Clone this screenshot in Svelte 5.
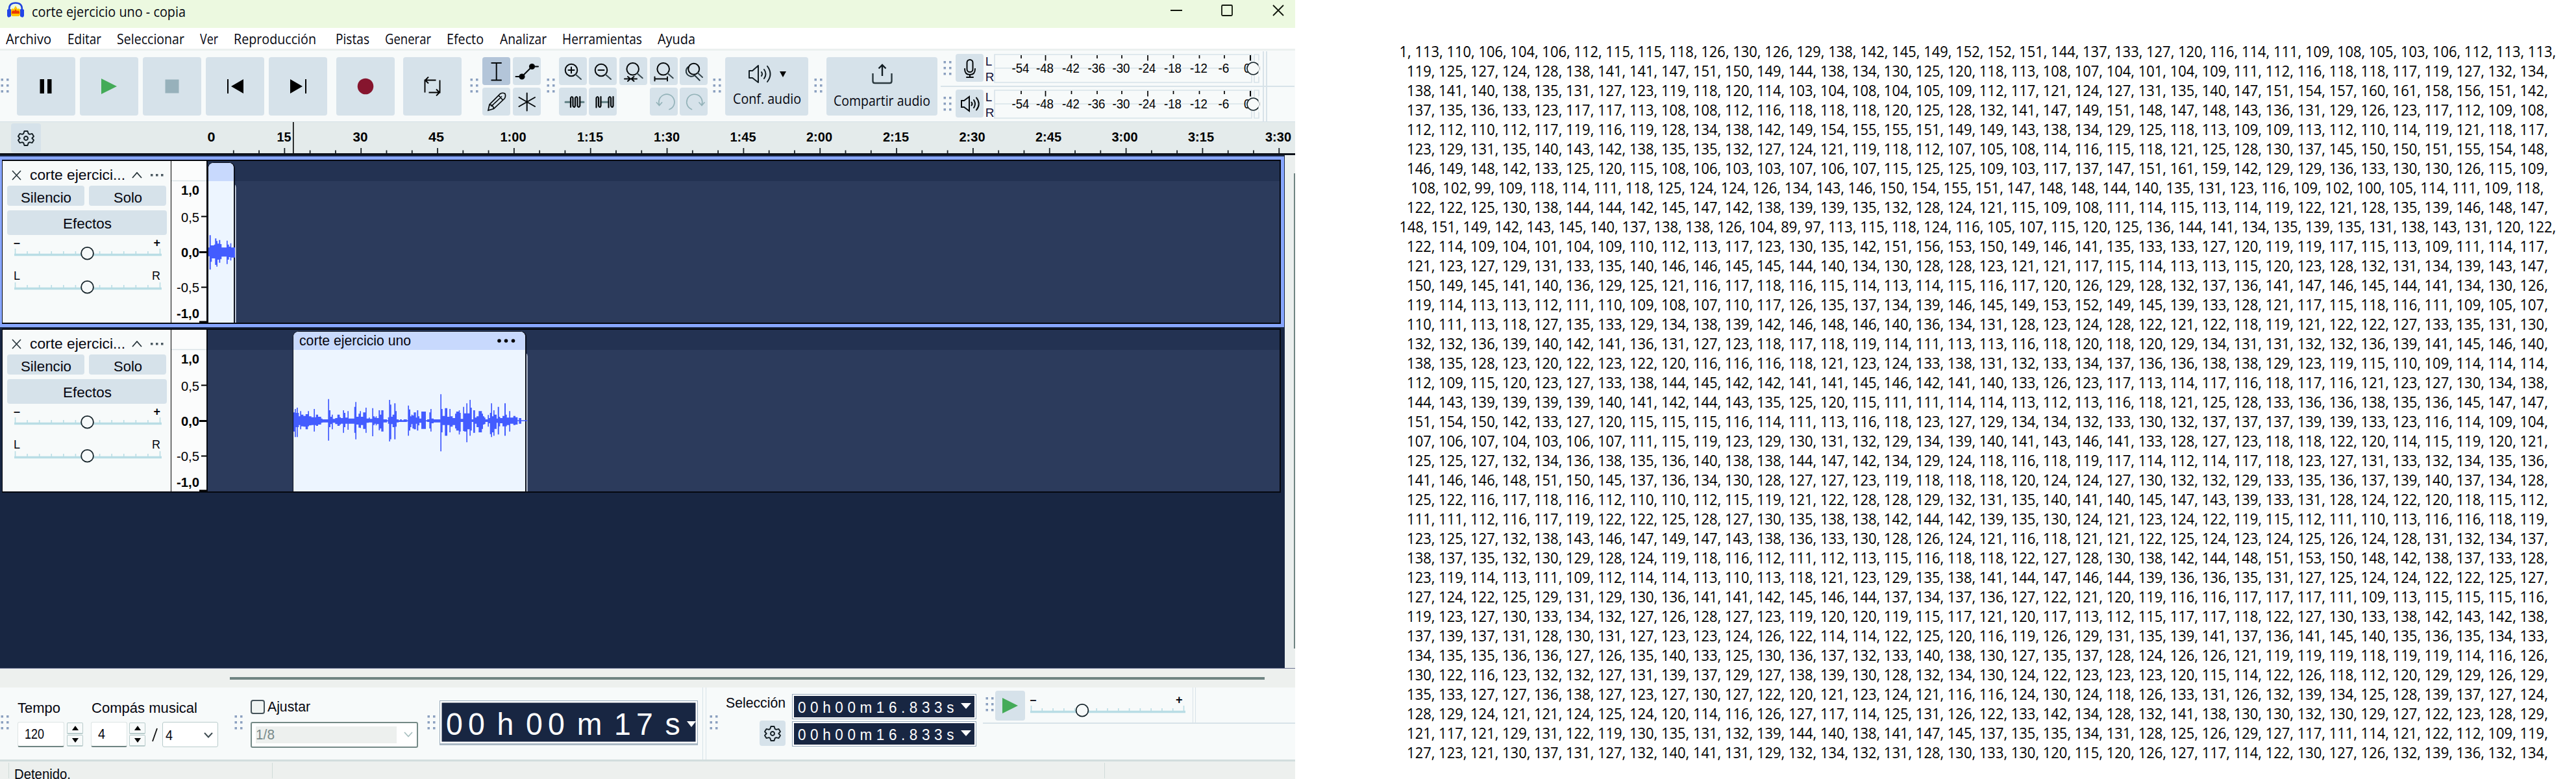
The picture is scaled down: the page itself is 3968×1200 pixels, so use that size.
<script>
  // Squeezes or stretches a label horizontally so that it fills its given width.
  function fit(node, width) {
    const natural = node.getBoundingClientRect().width;
    if (natural) node.style.transform = `scaleX(${width / natural})`;
  }

  const menu = [
    ['Archivo', 70, 25], ['Editar', 52, 24], ['Seleccionar', 104, 24], ['Ver', 28, 24],
    ['Reproducción', 127, 30], ['Pistas', 52, 24], ['Generar', 71, 24], ['Efecto', 57, 25],
    ['Analizar', 72, 24], ['Herramientas', 123, 24], ['Ayuda', 58, 0],
  ];

  const rulerLabels = [
    ['0', 325.5, 12], ['15', 437.5, 22], ['30', 555, 23], ['45', 672, 24], ['1:00', 790.5, 40], ['1:15', 909, 40],
    ['1:30', 1027, 40], ['1:45', 1144.5, 40], ['2:00', 1262, 40], ['2:15', 1380, 40], ['2:30', 1497.5, 40],
    ['2:45', 1615, 40], ['3:00', 1732.5, 40], ['3:15', 1850, 40], ['3:30', 1969, 40],
  ];
  const rulerTicks = Array.from({ length: 42 }, (_, i) => ({ x: 320.5 + (i + 1) * 39.28, major: (i + 1) % 3 === 0 }));

  const meterTicks = [
    ['-54', 42], ['-48', 79.5], ['-42', 119.5], ['-36', 159], ['-30', 197], ['-24', 237], ['-18', 276.5], ['-12', 316.5], ['-6', 355],
  ];

  // Envelope segments: start x, height above zero, depth below zero (in thirds of a pixel).
  const waveLong = [
    24,38,50, 30,54,76, 35,36,30, 39,60,76, 44,36,30, 49,20,20, 55,44,40, 60,28,26, 70,22,28, 80,30,40, 91,44,26,
    96,20,22, 107,16,20, 118,54,50, 123,16,20, 128,28,24, 138,18,18, 152,10,10, 158,6,8, 184,100,92, 189,48,30,
    195,18,16, 201,28,40, 206,8,10, 217,12,16, 227,28,24, 238,16,18, 243,12,14, 253,48,56, 258,36,30, 264,14,14,
    274,44,42, 279,10,14, 305,64,56, 310,86,86, 315,18,18, 325,32,32, 331,44,34, 336,18,20, 346,38,38, 357,60,56,
    362,10,10, 372,14,8, 377,8,8, 388,58,72, 393,20,20, 399,14,14, 404,20,22, 409,12,16, 418,48,44, 424,28,36,
    430,48,50, 440,6,8, 456,2,4, 461,16,14, 466,96,96, 471,74,86, 476,18,16, 482,28,30, 490,80,86, 496,44,28,
    501,6,8, 510,2,6, 516,6,6, 525,2,6, 533,6,6, 548,2,4, 553,70,70, 558,52,46, 564,20,30, 569,28,16, 574,24,36,
    580,38,40, 590,14,14, 595,48,46, 601,20,22, 606,10,10, 615,42,38, 636,2,4, 642,6,6, 652,38,36, 657,54,50,
    662,10,12, 672,6,8, 703,122,142, 708,54,54, 713,22,20, 724,58,70, 735,18,20, 745,54,54, 750,20,28, 760,12,20,
    771,32,36, 776,42,46, 788,48,64, 793,36,50, 797,8,6, 808,64,48, 813,34,50, 823,80,100, 828,34,40, 838,96,70,
    843,60,46, 848,6,6, 855,48,56, 863,14,14, 870,20,30, 880,44,54, 895,32,38, 900,20,18, 906,14,16, 911,6,6,
    922,26,28, 927,12,12, 932,36,62, 937,80,76, 942,20,54, 948,48,70, 953,28,38, 963,10,10, 968,64,64, 974,18,26,
    979,12,12, 990,22,26, 999,80,70, 1005,28,26, 1010,14,20, 1021,44,50, 1026,14,14, 1040,22,20, 1050,16,18,
    1060,2,2, 1066,12,14, 1077,2,2, 1104,2,2,
  ];
  const waveShort = [
    24,20,20, 29,77,82, 35,30,46, 40,30,30, 50,34,30, 55,62,60, 61,50,68, 66,38,36, 73,55,50, 79,36,34, 85,20,22,
    104,20,22, 108,52,56, 113,34,36, 119,24,24, 125,40,40, 130,20,26, 147,20,26,
  ];
  function envelope(data) {
    const top = [], bottom = [];
    for (let i = 0; i < data.length; i += 3) {
      const x = data[i] / 3 - 8;
      const next = i + 3 < data.length ? data[i + 3] / 3 - 8 : x;
      top.push(`${x.toFixed(1)},${(60 - data[i + 1] / 3).toFixed(1)}`, `${next.toFixed(1)},${(60 - data[i + 1] / 3).toFixed(1)}`);
      bottom.unshift(`${next.toFixed(1)},${(60 + data[i + 2] / 3).toFixed(1)}`, `${x.toFixed(1)},${(60 + data[i + 2] / 3).toFixed(1)}`);
    }
    return [...top, ...bottom].join(' ');
  }

  const tracks = [
    { id: 1, selected: true, offset: 0, width: 41.5, title: '', wave: envelope(waveShort) },
    { id: 2, selected: false, offset: 131, width: 360, title: 'corte ejercicio uno', wave: envelope(waveLong) },
  ];

  const samples = [
    '1, 113, 110, 106, 104, 106, 112, 115, 115, 118, 126, 130, 126, 129, 138, 142, 145, 149, 152, 152, 151, 144, 137, 133, 127, 120, 116, 114, 111, 109, 108, 105, 103, 106, 112, 113, 113,',
    '119, 125, 127, 124, 128, 138, 141, 141, 147, 151, 150, 149, 144, 138, 134, 130, 125, 120, 118, 113, 108, 107, 104, 101, 104, 109, 111, 112, 116, 118, 118, 117, 119, 127, 132, 134,',
    '138, 141, 140, 138, 135, 131, 127, 123, 119, 118, 120, 114, 103, 104, 108, 104, 105, 109, 112, 117, 121, 124, 127, 131, 135, 140, 147, 151, 154, 157, 160, 161, 158, 156, 151, 142,',
    '137, 135, 136, 133, 123, 117, 117, 113, 108, 108, 112, 116, 118, 118, 118, 120, 125, 128, 132, 141, 147, 149, 151, 148, 147, 148, 143, 136, 131, 129, 126, 123, 117, 112, 109, 108,',
    '112, 112, 110, 112, 117, 119, 116, 119, 128, 134, 138, 142, 149, 154, 155, 155, 151, 149, 149, 143, 138, 134, 129, 125, 118, 113, 109, 109, 113, 112, 110, 114, 119, 121, 118, 117,',
    '123, 129, 131, 135, 140, 143, 142, 138, 135, 135, 132, 127, 124, 121, 119, 118, 112, 107, 105, 108, 114, 116, 115, 118, 121, 125, 128, 130, 137, 145, 150, 150, 151, 155, 154, 148,',
    '146, 149, 148, 142, 133, 125, 120, 115, 108, 106, 103, 103, 107, 106, 107, 115, 125, 125, 109, 103, 117, 137, 147, 151, 161, 159, 142, 129, 129, 136, 133, 130, 130, 126, 115, 109,',
    '108, 102, 99, 109, 118, 114, 111, 118, 125, 124, 124, 126, 134, 143, 146, 150, 154, 155, 151, 147, 148, 148, 144, 140, 135, 131, 123, 116, 109, 102, 100, 105, 114, 111, 109, 118,',
    '122, 122, 125, 130, 138, 144, 144, 142, 145, 147, 142, 138, 139, 139, 135, 132, 128, 124, 121, 115, 109, 108, 111, 114, 115, 113, 114, 119, 122, 121, 128, 135, 139, 146, 148, 147,',
    '148, 151, 149, 142, 143, 145, 140, 137, 138, 138, 126, 104, 89, 97, 113, 115, 118, 124, 116, 105, 107, 115, 120, 125, 136, 144, 141, 134, 135, 139, 135, 131, 138, 143, 131, 120, 122,',
    '122, 114, 109, 104, 101, 104, 109, 110, 112, 113, 117, 123, 130, 135, 142, 151, 156, 153, 150, 149, 146, 141, 135, 133, 133, 127, 120, 119, 119, 117, 115, 113, 109, 111, 114, 117,',
    '121, 123, 127, 129, 131, 133, 135, 140, 146, 146, 145, 145, 144, 140, 134, 130, 128, 128, 123, 121, 121, 117, 115, 114, 113, 113, 115, 120, 123, 128, 132, 131, 134, 139, 143, 147,',
    '150, 149, 145, 141, 140, 136, 129, 125, 121, 116, 117, 118, 116, 115, 114, 113, 114, 115, 116, 117, 120, 126, 129, 128, 132, 137, 136, 141, 147, 146, 145, 144, 141, 134, 130, 126,',
    '119, 114, 113, 113, 112, 111, 110, 109, 108, 107, 110, 117, 126, 135, 137, 134, 139, 146, 145, 149, 153, 152, 149, 145, 139, 133, 128, 121, 117, 115, 118, 116, 111, 109, 105, 107,',
    '110, 111, 113, 118, 127, 135, 133, 129, 134, 138, 139, 142, 146, 148, 146, 140, 136, 134, 131, 128, 123, 124, 128, 122, 121, 122, 118, 119, 121, 122, 122, 127, 133, 135, 131, 130,',
    '132, 132, 136, 139, 140, 142, 141, 136, 131, 127, 123, 118, 117, 118, 119, 114, 111, 113, 113, 116, 118, 120, 118, 120, 129, 134, 131, 131, 132, 132, 136, 139, 141, 145, 146, 140,',
    '138, 135, 128, 123, 120, 122, 123, 122, 120, 116, 116, 116, 118, 121, 123, 124, 133, 138, 131, 132, 133, 134, 137, 136, 136, 138, 138, 129, 123, 119, 115, 110, 109, 114, 114, 114,',
    '112, 109, 115, 120, 123, 127, 133, 138, 144, 145, 142, 142, 141, 141, 145, 146, 142, 141, 140, 133, 126, 123, 117, 113, 114, 117, 116, 118, 117, 116, 121, 123, 127, 130, 134, 138,',
    '144, 143, 139, 139, 139, 139, 140, 141, 142, 144, 143, 135, 125, 120, 115, 111, 111, 114, 114, 113, 112, 113, 116, 118, 121, 125, 128, 133, 136, 136, 138, 135, 136, 145, 147, 147,',
    '151, 154, 150, 142, 133, 127, 120, 115, 115, 115, 116, 114, 111, 113, 116, 118, 123, 127, 129, 134, 134, 132, 133, 130, 132, 137, 137, 137, 139, 139, 133, 123, 116, 114, 109, 104,',
    '107, 106, 107, 104, 103, 106, 107, 111, 115, 119, 123, 129, 130, 131, 132, 129, 134, 139, 140, 141, 143, 146, 141, 133, 128, 127, 123, 118, 118, 122, 120, 114, 115, 119, 120, 121,',
    '125, 125, 127, 132, 134, 136, 138, 135, 136, 140, 138, 138, 144, 147, 142, 134, 129, 124, 118, 116, 118, 119, 117, 114, 112, 114, 117, 118, 123, 127, 131, 133, 132, 134, 135, 136,',
    '141, 146, 146, 148, 151, 150, 145, 137, 136, 134, 130, 128, 127, 127, 123, 119, 118, 118, 118, 120, 124, 124, 127, 130, 132, 132, 129, 133, 135, 136, 137, 139, 140, 137, 134, 128,',
    '125, 122, 116, 117, 118, 116, 112, 110, 110, 112, 115, 119, 121, 122, 128, 128, 129, 132, 131, 135, 140, 141, 140, 145, 147, 143, 139, 133, 131, 128, 124, 122, 120, 118, 115, 112,',
    '111, 111, 112, 116, 117, 119, 122, 122, 125, 128, 127, 130, 135, 138, 138, 142, 144, 142, 139, 135, 130, 124, 121, 123, 124, 122, 119, 115, 112, 111, 110, 113, 116, 116, 118, 119,',
    '123, 125, 127, 132, 138, 143, 146, 147, 149, 147, 143, 138, 136, 133, 130, 128, 126, 124, 121, 116, 118, 121, 121, 122, 125, 124, 123, 124, 125, 126, 124, 128, 131, 132, 134, 137,',
    '138, 137, 135, 132, 130, 129, 128, 124, 119, 118, 116, 112, 111, 112, 113, 115, 116, 118, 118, 122, 127, 128, 130, 138, 142, 144, 148, 151, 153, 150, 148, 142, 138, 137, 133, 128,',
    '123, 119, 114, 113, 111, 109, 112, 114, 114, 113, 110, 113, 118, 121, 123, 129, 135, 138, 141, 144, 147, 146, 144, 139, 136, 136, 135, 131, 127, 125, 124, 124, 122, 122, 125, 127,',
    '127, 124, 122, 125, 129, 131, 129, 130, 136, 141, 141, 142, 145, 146, 144, 137, 134, 137, 136, 127, 122, 121, 120, 119, 116, 116, 117, 117, 117, 111, 109, 113, 115, 115, 115, 116,',
    '119, 123, 127, 130, 133, 134, 132, 127, 126, 128, 127, 123, 119, 120, 120, 119, 115, 117, 121, 120, 117, 113, 112, 115, 117, 117, 118, 122, 127, 130, 133, 138, 142, 143, 142, 138,',
    '137, 139, 137, 131, 128, 130, 131, 127, 123, 123, 124, 126, 122, 114, 114, 122, 125, 120, 116, 119, 126, 129, 131, 135, 139, 141, 137, 136, 141, 145, 140, 135, 136, 135, 134, 133,',
    '134, 135, 135, 136, 136, 127, 126, 135, 140, 133, 125, 130, 136, 137, 132, 133, 140, 138, 130, 127, 135, 137, 128, 124, 126, 126, 121, 119, 119, 119, 118, 119, 119, 114, 116, 126,',
    '130, 122, 116, 123, 132, 132, 127, 131, 139, 137, 129, 127, 138, 139, 130, 128, 132, 134, 130, 124, 122, 123, 123, 123, 120, 115, 114, 122, 126, 118, 112, 120, 129, 129, 126, 129,',
    '135, 133, 127, 127, 136, 138, 127, 123, 127, 130, 127, 122, 120, 121, 123, 124, 121, 116, 116, 124, 130, 124, 118, 126, 133, 131, 126, 132, 139, 134, 125, 128, 139, 137, 127, 124,',
    '128, 129, 124, 121, 121, 124, 125, 124, 120, 114, 116, 126, 127, 117, 114, 125, 131, 126, 122, 133, 142, 134, 128, 132, 141, 138, 130, 130, 132, 130, 129, 127, 122, 123, 128, 129,',
    '121, 117, 121, 129, 131, 122, 119, 130, 135, 131, 132, 139, 144, 140, 138, 141, 147, 145, 137, 135, 135, 134, 131, 128, 125, 126, 129, 127, 117, 111, 114, 121, 122, 112, 109, 119,',
    '127, 123, 121, 130, 137, 131, 127, 132, 140, 141, 131, 129, 132, 134, 132, 131, 128, 130, 133, 130, 120, 115, 120, 126, 127, 117, 114, 122, 130, 127, 126, 132, 139, 136, 132, 134,',
  ];
</script>

{#snippet label(text, width, kind = '')}
  <span class="fit {kind}" style:width="{width}px"><span class="inner" use:fit={width}>{text}</span></span>
{/snippet}

{#snippet grip()}
  <svg class="grip" width="13" height="22" viewBox="0 0 13 22">
    {#each [0, 9, 18] as y}<path d="M.5 {y}h3.5v3.5h-3.5zM9 {y}h3.5v3.5h-3.5z" fill="#8ba0bf" />{/each}
  </svg>
{/snippet}

{#snippet gear()}
  <svg width="40" height="40" viewBox="-20 -20 40 40" fill="none" stroke="#111c22" stroke-width="1.9" stroke-linejoin="round">
    <path d="M-2.5-11h5l1.2 3.8 2 1.1 3.8-1 2.5 4.2-2.7 2.9 2.7 2.9-2.5 4.2-3.8-1-2 1.1-1.2 3.8h-5l-1.2-3.8-2-1.1-3.8 1-2.5-4.2 2.7-2.9-2.7-2.9 2.5-4.2 3.8 1 2-1.1z" />
    <circle r="3" />
  </svg>
{/snippet}

{#snippet speaker()}
  <svg width="40" height="32" viewBox="0 0 40 32" fill="none" stroke="#111c22" stroke-width="2" stroke-linecap="round" stroke-linejoin="round">
    <path d="M2 11h5l9-8v26l-9-7h-5zM21 13q2 3 0 6M25 9q5 7 0 14M30 4q9 12 0 24" />
  </svg>
{/snippet}

{#snippet slider(width, knob, ticks)}
  <svg class="slider" {width} height="26" viewBox="0 0 {width} 26">
    {#each Array(ticks + 1) as _, i}
      <path d="M{1.5 + (i * (width - 4)) / ticks} {i === 0 || i === ticks ? 6 : 10}V15" stroke="#b9dde5" stroke-width="1.6" />
    {/each}
    <path d="M0 15.5h{width}" stroke="#b9dde5" stroke-width="3.4" />
    <circle cx={knob} cy="13.3" r="9.4" fill="#f7fafa" stroke="#16242a" stroke-width="1.8" />
  </svg>
{/snippet}

{#snippet meter()}
  <svg width="410" height="46" viewBox="0 0 410 46">
    <path d="M1 1H397V44H1zM401 1h7V44h-7zM1 22H397" fill="none" stroke="#d8e3e9" stroke-width="1.6" />
    {#each meterTicks as [text, x], i}
      <path d="M{x} 2V{i === 1 || i === 5 ? 10.5 : 7}" stroke="#000" stroke-width="1.7" />
      <text x={x - 1} y="28.5" text-anchor="middle" textLength={text.length === 3 ? 27 : 17} lengthAdjust="spacingAndGlyphs">{text}</text>
    {/each}
    <path d="M395 2V10.5" stroke="#000" stroke-width="2" />
    <text x="385" y="28.5" textLength="10" lengthAdjust="spacingAndGlyphs">0</text>
    <circle cx="399.5" cy="22.5" r="9.5" fill="#f7fafa" stroke="#16242a" stroke-width="1.7" />
    <path d="M408.5 10V35" stroke="#f7fafa" stroke-width="2" />
  </svg>
{/snippet}

{#snippet lens(cx, cy, r, ex, ey)}
  <circle {cx} {cy} {r} fill="none" />
  <path d="M{cx + r * 0.7} {cy + r * 0.7}L{ex} {ey}" stroke-width="2" stroke="#35454b" />
{/snippet}

<main>
  <section class="editor">
    <header class="titlebar">
      <svg width="28" height="25" viewBox="0 0 28 25">
        <path d="M7 12l2-2 2 1 3-5 3 5 2-1 2 2v8l-2 2h-10l-2-2z" fill="#ffc400" />
        <path d="M8 15l2-2 2 1 2-3 2 3 2-1 2 2v3H8z" fill="#ea3b00" />
        <path d="M4 15V11C4 4 8 1.500 14 1.500S24 4 24 11v4" fill="none" stroke="#2145dd" stroke-width="2.500" />
        <path d="M1 12q5-3 6 0v10q-5 4-6-1zM27 12q-5-3-6 0v10q5 4 6-1z" fill="#2145e8" />
      </svg>
      {@render label('corte ejercicio uno - copia', 237, 'segoe')}
      <svg class="controls" width="175" height="20" viewBox="0 0 175 20" fill="none" stroke="#10160c" stroke-width="1.8">
        <path d="M0 10h18M158 2l16 16M174 2l-16 16" />
        <rect x="79" y="2" width="16" height="16" rx="1.500" />
      </svg>
    </header>

    <nav class="menu">
      {#each menu as [text, width, gap]}
        <span class="entry" style:margin-right="{gap}px">{@render label(text, width, 'segoe')}</span>
      {/each}
    </nav>

    <div class="toolbar">
      <div class="transport">
        {@render grip()}
        <button class="big first"><svg width="22" height="22"><path d="M1.500 0h6.500v22h-6.500zM13 0h6.500v22H13z" /></svg></button>
        <button class="big"><svg width="24" height="24"><path d="M0 0 24 12 0 24z" fill="#44ab58" /></svg></button>
        <button class="big"><svg width="22" height="22"><path d="M.5.5h21v21H.5z" fill="#97b1bb" /></svg></button>
        <button class="big"><svg width="25" height="24"><path d="M25 1v22L6 12zM0 1h2v22H0z" /></svg></button>
        <button class="big"><svg width="25" height="24"><path d="M0 1v22L19 12zM23 1h2v22h-2z" /></svg></button>
        <button class="big apart"><svg width="26" height="26"><circle cx="13" cy="13" r="12.300" fill="#86152e" /></svg></button>
        <button class="big apart"><svg width="28" height="30" viewBox="0 0 28 30" fill="none" stroke="#000" stroke-width="1.900"><path d="M2.500 24.500V5.500h17M25.500 5.500v19H8.500M8 .5 3 5.500l5 5M20 19.500l5 5-5 5" /></svg></button>
      </div>

      {@render grip()}
      <div class="tools two">
        <button class="small on"><svg viewBox="0 0 43 43"><path d="M14.300 9h14.700M14.300 35.500h14.700M21.700 9v26.500" /></svg></button>
        <button class="small"><svg viewBox="0 0 43 43"><path d="M4.500 30H14L29.500 14.500H39" /><circle cx="14" cy="30" r="3.600" fill="#000" /><circle cx="29.500" cy="14.500" r="3.600" fill="#000" /></svg></button>
        <button class="small"><svg viewBox="0 0 43 43"><path d="M9 35l2-9L27.500 9.500q4-2.500 7.500 0 1.500 4-1 7.500L17.500 32.500zM11 26q6 1 6.500 6.500M25 12l6.500 7M14 28.500 29.500 14" stroke-width="1.700" /></svg></button>
        <button class="small"><svg viewBox="0 0 43 43"><path d="M21.700 8.500v27M9.500 15 34 29M34 15 9.500 29" /></svg></button>
      </div>

      {@render grip()}
      <div class="tools five">
        <button class="small"><svg viewBox="0 0 43 43">{@render lens(19, 20, 9.3, 34, 34)}<path d="M14.500 20h9M19 15.500v9" /></svg></button>
        <button class="small"><svg viewBox="0 0 43 43">{@render lens(19, 20, 9.3, 34, 34)}<path d="M14.500 20h9" /></svg></button>
        <button class="small"><svg viewBox="0 0 43 43">{@render lens(20.7, 18.3, 9.3, 35.7, 32.3)}<path d="M8 33.500h19M13 30l4 3.500-4 3.500M22.500 30l-4 3.500 4 3.500" /></svg></button>
        <button class="small"><svg viewBox="0 0 43 43">{@render lens(20.7, 18.3, 9.3, 35.7, 32.3)}<path d="M7.500 33.500h19.500M7.500 30.500v6M27 30.500v6" /></svg></button>
        <button class="small"><svg viewBox="0 0 43 43"><path d="M13 15a8 8 0 1 0 10 13M23 28l7.700 7.700" stroke="#24343a" />{@render lens(21.7, 18.3, 8.5, 35, 31)}</svg></button>
        <button class="small"><svg viewBox="0 0 43 43"><path d="M10 22.300h8M33 22.300h5" stroke="#5f7f83" stroke-width="3" /><path d="M18 30V16q2-4 3.500 0V28q2 4 3.500 0V16q2-4 3.500 0V28q2 4 3.800 0V14" stroke-width="2.200" /></svg></button>
        <button class="small"><svg viewBox="0 0 43 43"><path d="M19 22.300h11" stroke="#5f7f83" stroke-width="3" /><path d="M11.500 30.500V16q2-4 3.500 0V28q2 4 3.500 0V14M30.500 30.500V16q2-4 3.500 0V28q2 4 3.500 0V14" stroke-width="2.200" /></svg></button>
        <span></span>
        <button class="small"><svg viewBox="0 0 43 43"><path class="faded" d="M30 33.500A12 12 0 1 0 14.700 26.500M10.500 23l4 4.500 4-4.500" /></svg></button>
        <button class="small"><svg viewBox="0 0 43 43"><path class="faded" d="M18.500 33.500A12 12 0 1 1 34 26.500M30 23l4 4.500 4-4.500" /></svg></button>
      </div>

      {@render grip()}
      <button class="wide audio">
        <span class="pair">{@render speaker()}<svg width="10" height="9"><path d="M0 0h10L5 9z" /></svg></span>
        {@render label('Conf. audio', 105, 'segoe')}
      </button>
      {@render grip()}
      <button class="wide share">
        <svg width="34" height="32" viewBox="0 0 34 32" fill="none" stroke="#2c3a40" stroke-width="2.400"><path d="M2.500 15v12q0 3 3 3h23q3 0 3-3V15" /><path d="M17 19V2.500M11.500 7.500 17 2l5.500 5.500" stroke="#111c22" /></svg>
        {@render label('Compartir audio', 149, 'segoe')}
      </button>

      <div class="meters">
        {#each ['mic', 'out'] as kind}
          <div class="meter-row">
            {@render grip()}
            <button class="small meter-icon">
              {#if kind === 'mic'}
                <svg viewBox="0 0 43 43"><rect x="17.500" y="9" width="9" height="19" rx="4.500" /><path d="M14 23q0 9 8 9t8-9M22 32v4M17 36h10" /></svg>
              {:else}
                <svg viewBox="0 0 43 43"><path d="M9 17h4l8-6v22l-8-6h-4zM24.500 19.500q2 2.500 0 5M28 16q4 6 0 12M32 12.500q7.500 9.500 0 19" /></svg>
              {/if}
            </button>
            <span class="lr"><b>L</b><b>R</b></span>
            {@render meter()}
          </div>
        {/each}
      </div>
    </div>

    <div class="ruler">
      <span class="ruler-gear">{@render gear()}</span>
      <svg class="ruler-scale" width="1995" height="51" viewBox="0 0 1995 51">
        {#each rulerLabels as [text, x, width]}
          <text {x} y="29.500" text-anchor="middle" textLength={width} lengthAdjust="spacingAndGlyphs">{text}</text>
        {/each}
        {#each rulerTicks as t}
          <path d="M{t.x} {t.major ? 40 : 43.5}V49" stroke="#1b2226" stroke-width="1.800" />
        {/each}
        <path d="M451.800 0V50" stroke="#000" stroke-width="1.600" />
        <path d="M0 49.500H1995" stroke="#0d1119" stroke-width="3" />
      </svg>
    </div>

    <div class="workspace">
      <div class="tracks">
        {#each tracks as track (track.id)}
          <article class="track" class:selected={track.selected}>
            <aside class="panel">
              <div class="panel-title">
                <svg width="15" height="16" fill="none" stroke="#26343a" stroke-width="1.600"><path d="M1 1l13 14M14 1 1 15" /></svg>
                {@render label('corte ejercici...', 147, 'arial')}
                <svg width="16" height="10" fill="none" stroke="#26343a" stroke-width="1.800"><path d="M1 9l7-8 7 8" /></svg>
                <svg width="20" height="4" fill="#4c5a62"><path d="M0 0h3.500v3.500h-3.500zM8 0h3.500v3.500h-3.500zM16 0h3.500v3.500h-3.500z" /></svg>
              </div>
              <div class="panel-buttons">
                <button>{@render label('Silencio', 78, 'arial')}</button>
                <button>{@render label('Solo', 44, 'arial')}</button>
              </div>
              <button class="effects">{@render label('Efectos', 75, 'arial')}</button>
              <div class="ends signs"><b>–</b><b>+</b></div>
              {@render slider(227, 112.5, 12)}
              <div class="ends letters"><b>L</b><b>R</b></div>
              {@render slider(227, 112.5, 12)}
            </aside>
            <svg class="vscale" width="54" height="249" viewBox="0 0 54 249">
              <path d="M0 30.500H54" stroke="#d9e2e6" stroke-width="1.500" />
              {#each [['1,0', 52, 1, 28], ['0,5', 93.500, 0, 28], ['0,0', 148, 1, 28], ['-0,5', 202, 0, 35], ['-1,0', 242, 1, 35]] as [text, y, bold, w]}
                <text class:bold x={43} {y} text-anchor="end" textLength={w} lengthAdjust="spacingAndGlyphs">{text}</text>
              {/each}
              <path d="M46 85.500h8M46 194.500h8" stroke="#000" stroke-width="2" />
              <path d="M43 140.500h11M43 248h11" stroke="#000" stroke-width="3" />
            </svg>
            <div class="lane">
              <div class="clip" style:width="{track.width}px" style:margin-left="{track.offset}px">
                <div class="clip-head">
                  {#if track.title}
                    {@render label(track.title, 172, 'arial')}
                    <svg width="28" height="6"><circle cx="3" cy="3" r="2.800" /><circle cx="13.500" cy="3" r="2.800" /><circle cx="24.500" cy="3" r="2.800" /></svg>
                  {/if}
                </div>
                <div class="clip-body">
                  <svg width={track.width + 3} height="120" viewBox="0 0 {track.width + 3} 120"><polygon points={track.wave} fill="#435cff" /></svg>
                </div>
              </div>
            </div>
          </article>
        {/each}
      </div>
      <div class="vscroll"><i></i></div>
    </div>
    <div class="hscroll"><i></i></div>

    <footer class="bottom">
      {@render grip()}
      <div class="signature">
        <div class="row labels">{@render label('Tempo', 66, 'arial')}{@render label('Compás musical', 163, 'arial')}</div>
        <div class="row fields">
          <span class="field tempo">{@render label('120', 30, 'arial')}</span>
          <span class="spin"><i><svg width="10" height="7"><path d="M0 7 5 0l5 7z" /></svg></i><i><svg width="10" height="7"><path d="M0 0h10L5 7z" /></svg></i></span>
          <span class="field beats">{@render label('4', 11, 'arial')}</span>
          <span class="spin"><i><svg width="10" height="7"><path d="M0 7 5 0l5 7z" /></svg></i><i><svg width="10" height="7"><path d="M0 0h10L5 7z" /></svg></i></span>
          <svg class="slash" width="9" height="22"><path d="M1 21 8 1" stroke="#111" stroke-width="1.800" /></svg>
          <span class="combo">{@render label('4', 11, 'arial')}<svg width="14" height="9" fill="none" stroke="#3f4d52" stroke-width="2"><path d="M1 1l6 6.500L13 1" /></svg></span>
        </div>
      </div>
      {@render grip()}
      <div class="snap">
        <div class="check"><i></i>{@render label('Ajustar', 66, 'arial')}</div>
        <div class="disabled-combo"><span>{@render label('1/8', 29, 'arial')}</span><svg width="14" height="9" fill="none" stroke="#a9c0c0" stroke-width="1.800"><path d="M1 1l6 6.500L13 1" /></svg></div>
      </div>
      {@render grip()}
      <div class="clock">{@render label('00 h 00 m 17 s', 369, 'digits')}<svg width="14" height="9"><path d="M0 0h14L7 9z" fill="#fff" /></svg></div>
      <i class="divider"></i>
      {@render grip()}
      <div class="selection">
        {@render label('Selección', 92, 'arial')}
        <span class="sel-gear">{@render gear()}</span>
      </div>
      <div class="times">
        {#each [0, 1] as _}
          <div class="time">{@render label('00h00m16.833s', 247, 'tdigits')}<svg width="16" height="9"><path d="M0 0h16L8 9z" fill="#fff" /></svg></div>
        {/each}
      </div>
      <div class="rest">
        <div class="speed">
          {@render grip()}
          <button><svg width="24" height="24"><path d="M0 0 24 12 0 24z" fill="#44ab58" /></svg></button>
          <div class="speed-slider">
            <div class="ends signs"><b>–</b><b>+</b></div>
            {@render slider(239, 80, 14)}
          </div>
          <i class="divider"></i>
        </div>
      </div>
    </footer>

    <div class="status">
      <span class="cell c1"></span>
      <span class="cell c2">{@render label('Detenido.', 87, 'arial')}</span>
      <span class="cell c3"></span>
    </div>
  </section>

  <section class="listing">
    {#each samples as row}<p>{row}</p>{/each}
  </section>
</main>

<style>
  :global(body) { background: #fff; }
  main { display: flex; width: 3968px; height: 1200px; overflow: hidden; background: #fff; font-family: 'Liberation Sans', Arial, sans-serif; color: #05060f; }
  main :global(svg) { display: block; flex: none; }
  button { border: 0; margin: 0; padding: 0; background: #d6e2ea; border-radius: 4px; font: inherit; color: inherit; display: flex; align-items: center; justify-content: center; flex: none; }
  b { font-weight: 400; }
  i { display: block; }

  .fit { display: block; flex: none; white-space: pre; }
  .inner { display: inline-block; transform-origin: 0 50%; }
  .segoe { font: 21px/26px 'Open Sans', 'Noto Sans', sans-serif; }
  .arial { font: 22px/26px 'Liberation Sans', Arial, sans-serif; }
  .digits { font: 48px/54px 'Liberation Sans', Arial, sans-serif; letter-spacing: 8.500px; word-spacing: -11px; color: #fff; }
  .tdigits { font: 23px/26px 'Liberation Sans', Arial, sans-serif; letter-spacing: 6.700px; color: #fff; }

  .editor { width: 1995px; height: 1200px; display: flex; flex-direction: column; overflow: hidden; flex: none; background: #f7fafa; }
  .titlebar { height: 43px; display: flex; align-items: flex-start; padding: 3px 17px 0 10px; box-sizing: border-box; background: #ecf9e0; flex: none; }
  .titlebar .fit { margin: 2px 0 0 11px; }
  .controls { margin: 3px 0 0 auto; }
  .menu { height: 30px; display: flex; align-items: center; padding: 2px 0 0 9px; background: #fff; border-bottom: 3px solid #ebf0ef; flex: none; }

  .toolbar { height: 110px; display: flex; align-items: flex-start; padding-top: 10px; box-sizing: border-box; border-bottom: 1.500px solid #d5e1e6; background: #f7fafa; flex: none; }
  .grip { margin-top: 33px; }
  .transport { display: flex; width: 711px; margin-right: 12.500px; padding-left: 1px; box-sizing: border-box; }
  .big { width: 90px; height: 90px; margin-right: 7px; }
  .first { margin-left: 12px; }
  .apart { margin-left: 6.500px; }
  .tools { display: grid; gap: 4px; grid-auto-rows: 43px; margin: 0 9px 0 6px; }
  .two { grid-template-columns: 43px 43px; }
  .five { grid-template-columns: repeat(5, 43px); margin: 0 8px 0 6px; gap: 4px 3.700px; }
  .small { width: 43px; height: 43px; }
  .small svg { width: 43px; height: 43px; fill: none; stroke: #05090b; stroke-width: 2; stroke-linecap: round; }
  .small .faded { stroke: #93b2b8; stroke-width: 1.700; }
  .on { background: #b3c5d9; }
  .wide { height: 90px; flex-direction: column; justify-content: flex-start; box-sizing: border-box; }
  .audio { width: 128px; margin: 0 9px 0 6px; padding-top: 10px; gap: 9px; }
  .pair { display: flex; align-items: center; gap: 9px; padding-left: 0; }
  .share { width: 171px; margin: 0 5px 0 6px; padding-top: 10px; gap: 12px; }
  .meters { margin-top: -9px; width: 545px; display: flex; flex-direction: column; height: 109px; }
  .meter-row { display: flex; height: 55px; padding: 4px 0 0 3.500px; box-sizing: border-box; border-bottom: 2px solid #d8e3e9; }
  .meter-row:last-child { border-bottom: 0; height: 54px; }
  .meter-row::after { content: ''; width: 3.500px; border: solid #d8e3e9; border-width: 0 2px; margin: -4px 0 -1px 4px; }
  .meter-row .grip { margin: 11px 6px 0 0; }
  .lr { display: flex; flex-direction: column; width: 13px; margin-left: 3px; font-size: 19px; line-height: 24px; color: #14143c; }
  .meter-row text { font-size: 19.500px; }

  .ruler { height: 51px; display: grid; background: #e4ebeb; flex: none; }
  .ruler-gear, .ruler-scale { grid-area: 1 / 1; }
  .ruler-gear { width: 46px; height: 45px; margin: 2px 0 0 17px; background: #d6e2ea; border-radius: 4px; display: flex; align-items: center; justify-content: center; }
  .ruler-scale text { font-size: 21px; font-weight: 700; }

  .workspace { height: 790px; display: flex; background: #182642; flex: none; border-bottom: 1.500px solid #6b7290; }
  .tracks { width: 1979px; background: #182642; flex: none; }
  .track { display: flex; height: 249px; width: 1967px; border: 2px solid #05080f; border-left-width: 1.500px; margin: 7px 5px 6px 3px; }
  .track.selected { box-shadow: 0 0 0 5px #88a6ff; margin-bottom: 7px; }
  .panel { width: 260px; height: 249px; background: #f7fafa; border-right: 1.500px solid #000; padding: 11px 0 0 7px; box-sizing: border-box; flex: none; }
  .panel-title { display: flex; align-items: center; height: 27px; padding-left: 7px; margin-top: -3px; margin-bottom: 3px; }
  .panel-title .fit { margin: 1px 10px 0 13px; }
  .panel-title .fit + svg { margin-right: 13px; }
  .panel-buttons { display: flex; gap: 7px; }
  .panel-buttons button { width: 119px; height: 31px; padding-top: 6px; box-sizing: border-box; }
  .effects { width: 246px; height: 38px; margin-top: 7px; padding-top: 4px; box-sizing: border-box; }
  .ends { display: flex; justify-content: space-between; font-size: 18px; line-height: 18px; height: 18px; padding: 0 0 0 10px; width: 236px; box-sizing: border-box; }
  .signs b { font-weight: 700; }
  .panel .signs { margin-top: 3px; }
  .panel .slider { margin-left: 11px; margin-top: -6px; }
  .panel .letters { margin-top: 12px; height: 25px; line-height: 20px; }
  .panel .letters + .slider { margin-top: -11px; }
  .vscale { background: #fbfcfc; border-right: 2.500px solid #05080f; }
  .vscale text { font-size: 20.500px; }
  .vscale .bold { font-weight: 700; }
  .lane { flex: 1; background: linear-gradient(#233252 31px, #2c3b5c 31px); display: flex; align-items: flex-end; overflow: hidden; }
  .clip { height: 247px; background: #edf5ff; border-right: 2px solid #0a0f1c; border-left: 1.500px solid #0a0f1c; border-top: 1.500px solid #0a0f1c; border-radius: 9px 9px 0 0; box-sizing: border-box; box-shadow: 1.500px 30px 0 #e4ebf7; }
  .clip-head { height: 28px; background: #c8d9fd; border-radius: 8px 8px 0 0; display: flex; align-items: center; justify-content: space-between; padding: 0 15px 0 9px; box-sizing: border-box; overflow: hidden; }
  .clip-body { padding-top: 49px; }
  .vscroll { width: 16px; background: #ebefee; display: flex; justify-content: flex-end; align-items: flex-start; }
  .vscroll i { width: 2px; height: 732px; margin-top: 28px; background: #6f8482; }
  .hscroll { height: 28.500px; background: #edf0ee; padding: 13px 0 0 354px; box-sizing: border-box; flex: none; }
  .hscroll i { width: 1594px; height: 4px; background: #6f8482; }

  .bottom { height: 111px; display: flex; background: #f7fafa; border-bottom: 3px solid #d2dddd; flex: none; padding-left: 1px; }
  .bottom > .grip { margin-top: 43.500px; }
  .signature { margin: 19px 23px 0 13px; width: 311px; }
  .labels { display: flex; gap: 48px; height: 34px; }
  .fields { display: flex; align-items: center; height: 40px; }
  .field { height: 39px; background: #fff; border: 1px solid #dde5e5; border-bottom: 2px solid #6f8482; box-sizing: border-box; padding: 5px 0 0 10px; border-radius: 3px; }
  .tempo { width: 72px; }
  .beats { width: 56px; }
  .spin { width: 25px; display: flex; flex-direction: column; gap: 1.500px; margin: 0 12px 0 4px; }
  .beats + .spin { margin: 0 10px 0 3px; }
  .spin i { height: 18px; border: 1px solid #b9cccc; border-bottom-width: 2px; border-radius: 2px; box-sizing: border-box; display: flex; align-items: center; justify-content: center; }
  .slash { margin-right: 7px; }
  .combo { width: 86px; height: 39px; border: 1.500px solid #b9cccc; border-radius: 3px; background: #fff; box-sizing: border-box; display: flex; align-items: center; justify-content: space-between; padding: 2px 7px 0 4px; }
  .snap { width: 258px; margin: 17px 14px 0 12px; }
  .check { display: flex; gap: 4px; align-items: center; height: 27px; }
  .check i { width: 22px; height: 22px; border: 2px solid #46545a; border-radius: 4px; box-sizing: border-box; background: #f0f4f2; margin-top: -1px; }
  .disabled-combo { height: 40px; margin-top: 9px; border: 2px solid #748986; border-radius: 3px; box-sizing: border-box; background: #fff; display: flex; align-items: center; justify-content: space-between; padding: 0 6px; }
  .disabled-combo span { color: #788a8a; }
  .disabled-combo > span { width: 217px; height: 26px; background: #edf0ee; }
  .clock { width: 398px; height: 69px; margin: 20.500px 7px 0 6px; border: 1.500px solid #98aabb; border-bottom: 3px solid #aab8c4; box-shadow: inset 0 0 0 2.500px #fff; box-sizing: border-box; background: #182642; display: flex; align-items: center; justify-content: space-between; padding: 6px 2px 0 9px; }
  .divider { width: 3.500px; border: solid #d8e3e9; border-width: 0 1.800px; }
  .divider + .grip { margin-left: 5px; }
  .selection { width: 93px; margin: 11px 10px 0 11px; display: flex; flex-direction: column; align-items: flex-end; }
  .sel-gear { width: 40px; height: 39px; background: #d6e2ea; border-radius: 4px; margin-top: 14.500px; }
  .times { margin: 10px 14px 0 0; display: flex; flex-direction: column; gap: 3px; }
  .time { width: 284px; height: 39px; border: 1.500px solid #98aabb; box-shadow: inset 0 0 0 2px #fff; background: #182642; box-sizing: border-box; display: flex; align-items: center; padding: 4px 0 0 8px; gap: 4px; }
  .time svg { margin-top: -6px; }
  .rest { flex: 1; }
  .speed { display: flex; height: 56px; border-bottom: 2px solid #d8e3e9; box-sizing: border-box; margin-left: -4px; padding-left: 4px; }
  .speed .grip { margin: 15px 2px 0 0; }
  .speed button { width: 46px; height: 46px; margin: 5px 8px 0 0; }
  .speed-slider { width: 239px; margin: 10px 11px 0 0; }
  .speed-slider .ends { width: 239px; padding: 0 4px 0 0; }
  .speed-slider .slider { margin-top: -6px; }

  .status { flex: 1; background: #edf0ee; display: flex; padding-top: 2px; overflow: hidden; }
  .cell { border-right: 1.500px solid #d0dcd9; box-sizing: border-box; height: 24px; flex: none; }
  .c1 { width: 14px; }
  .c2 { width: 406px; padding: 5px 0 0 8px; }
  .c3 { width: 1282px; }

  .listing { flex: 1; min-width: 0; padding: 63.500px 0 0 129px; display: flex; flex-direction: column; align-items: center; }
  .listing p { margin: 0; height: 30px; font: 24.500px/30px 'Open Sans', 'Noto Sans', sans-serif; color: #000; white-space: pre; transform: scaleX(0.895); flex: none; }
</style>
